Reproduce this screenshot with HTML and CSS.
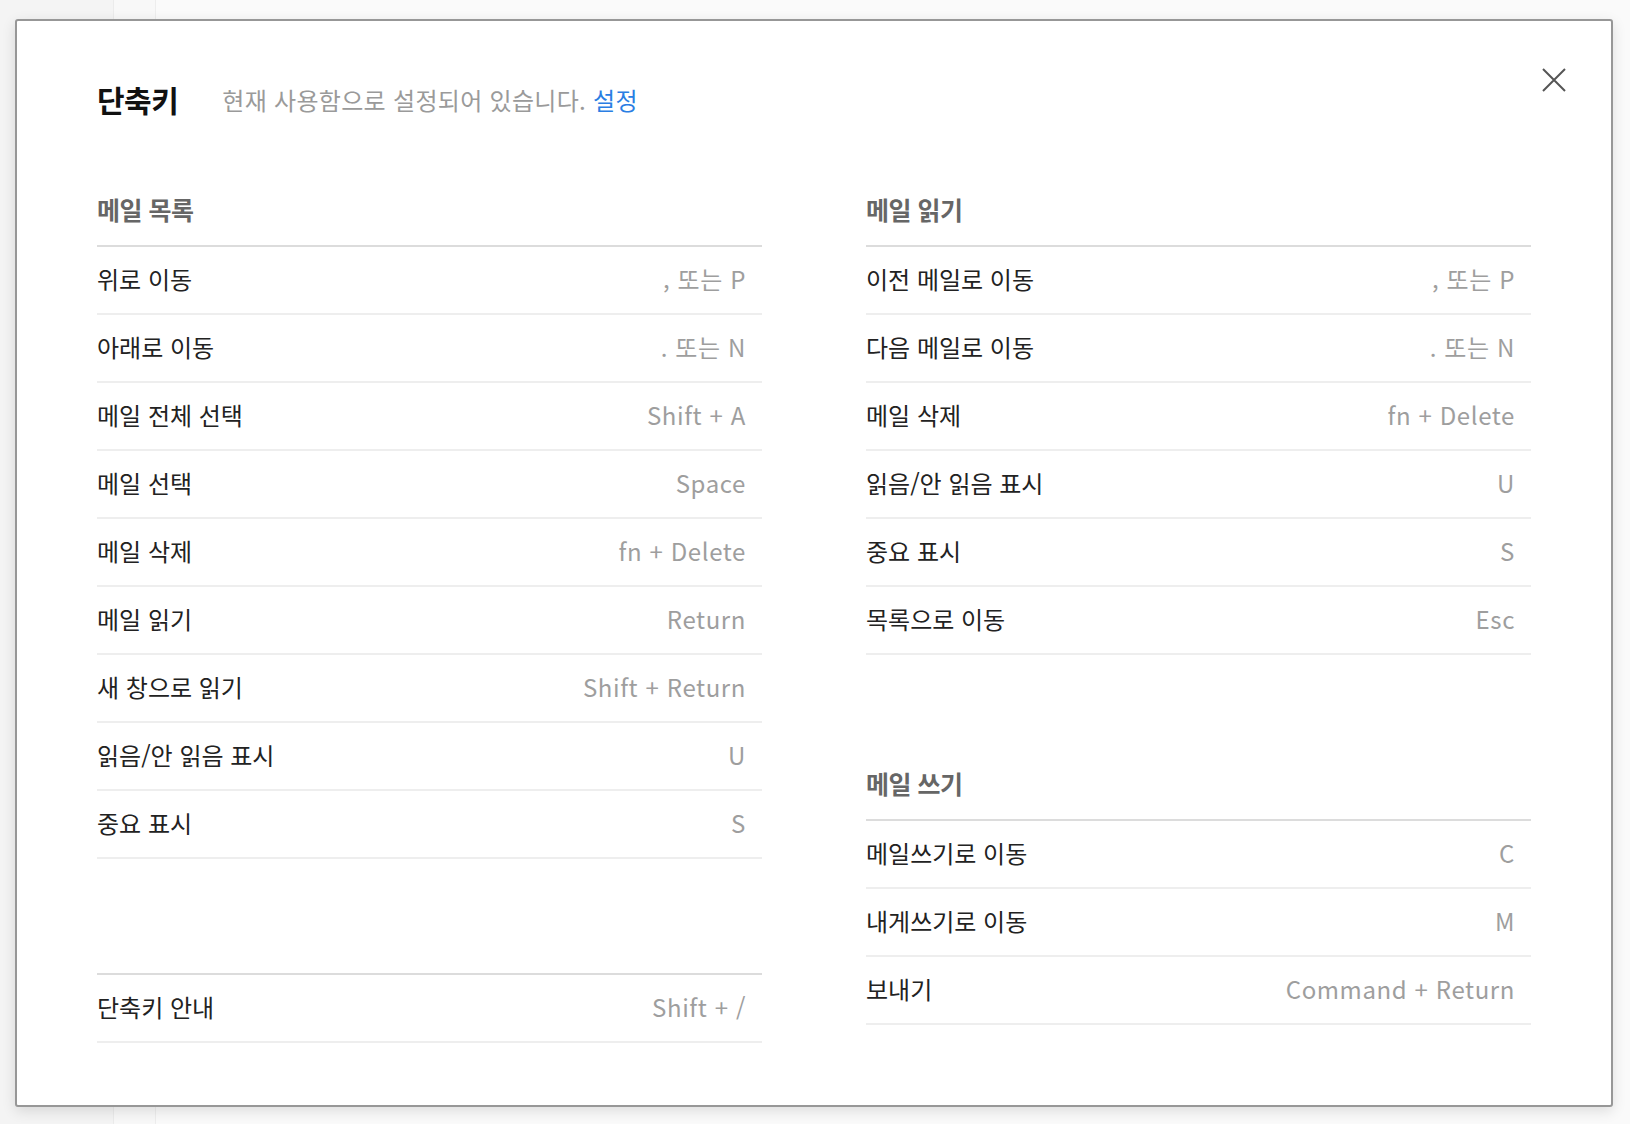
FILE: index.html
```html
<!DOCTYPE html>
<html lang="ko">
<head>
    <meta charset="UTF-8">
    <meta name="viewport" content="width=device-width, initial-scale=1.0">
    <title>단축키</title>
    <link rel="stylesheet" href="styles.css">
</head>
<body>
    <div class="app">
        <div class="app-nav"></div>
        <div class="app-side"></div>
        <div class="app-main"></div>
    </div>

    <div class="modal">
        <div class="modal-head">
            <h1 class="modal-title">단축키</h1>
            <p class="modal-desc">현재 사용함으로 설정되어 있습니다. <a href="#" class="link">설정</a></p>
        </div>

        <button class="close" aria-label="닫기">
            <svg width="24" height="24" viewBox="0 0 24 24">
                <path d="M1 1L23 23M23 1L1 23" stroke="#555" stroke-width="2" fill="none"/>
            </svg>
        </button>

        <div class="columns">
            <div class="column">
                <h2 class="section-title">메일 목록</h2>
                <ul class="keys">
                    <li><span class="name">위로 이동</span><span class="key">, 또는 P</span></li>
                    <li><span class="name">아래로 이동</span><span class="key">. 또는 N</span></li>
                    <li><span class="name">메일 전체 선택</span><span class="key">Shift + A</span></li>
                    <li><span class="name">메일 선택</span><span class="key">Space</span></li>
                    <li><span class="name">메일 삭제</span><span class="key">fn + Delete</span></li>
                    <li><span class="name">메일 읽기</span><span class="key">Return</span></li>
                    <li><span class="name">새 창으로 읽기</span><span class="key">Shift + Return</span></li>
                    <li><span class="name">읽음/안 읽음 표시</span><span class="key">U</span></li>
                    <li><span class="name">중요 표시</span><span class="key">S</span></li>
                </ul>
                <ul class="keys guide">
                    <li><span class="name">단축키 안내</span><span class="key">Shift + /</span></li>
                </ul>
            </div>

            <div class="column">
                <h2 class="section-title">메일 읽기</h2>
                <ul class="keys">
                    <li><span class="name">이전 메일로 이동</span><span class="key">, 또는 P</span></li>
                    <li><span class="name">다음 메일로 이동</span><span class="key">. 또는 N</span></li>
                    <li><span class="name">메일 삭제</span><span class="key">fn + Delete</span></li>
                    <li><span class="name">읽음/안 읽음 표시</span><span class="key">U</span></li>
                    <li><span class="name">중요 표시</span><span class="key">S</span></li>
                    <li><span class="name">목록으로 이동</span><span class="key">Esc</span></li>
                </ul>

                <h2 class="section-title next">메일 쓰기</h2>
                <ul class="keys">
                    <li><span class="name">메일쓰기로 이동</span><span class="key">C</span></li>
                    <li><span class="name">내게쓰기로 이동</span><span class="key">M</span></li>
                    <li><span class="name">보내기</span><span class="key">Command + Return</span></li>
                </ul>
            </div>
        </div>
    </div>
</body>
</html>
```

FILE: styles.css
```css
* {
    box-sizing: border-box;
}

body {
    margin: 0;
    height: 100vh;
    overflow: hidden;
    background-color: #f7f7f7;
    font-family: "Noto Sans CJK KR", "Noto Sans", sans-serif;
    color: #222;
}

.app {
    display: flex;
    height: 100%;
}

.app-nav {
    width: 114px;
    background-color: #f4f4f4;
    border-right: 1px solid #ebebeb;
}

.app-side {
    width: 42px;
    background-color: #f8f8f8;
    border-right: 1px solid #ededed;
}

.app-main {
    flex: 1;
    background-color: #fafafa;
}

.modal {
    position: absolute;
    left: 15px;
    top: 19px;
    width: 1598px;
    height: 1088px;
    background: #fff;
    border: 2px solid #979797;
    border-radius: 3px;
    box-shadow: 0 4px 14px rgba(0, 0, 0, 0.12);
    padding: 0 80px;
}

.modal-head {
    display: flex;
    align-items: center;
    height: 40px;
    margin-top: 58px;
}

.modal-title {
    margin: 0;
    font-size: 30px;
    font-weight: 700;
    letter-spacing: -0.5px;
    color: #111;
}

.modal-desc {
    margin: 0 0 0 44px;
    font-size: 24px;
    letter-spacing: 0.3px;
    color: #9a9a9a;
}

.link {
    color: #2a7ee3;
    text-decoration: none;
}

.close {
    position: absolute;
    top: 47px;
    right: 45px;
    width: 24px;
    height: 24px;
    padding: 0;
    border: 0;
    background: none;
    cursor: pointer;
}

.close svg {
    display: block;
}

.columns {
    display: grid;
    grid-template-columns: 1fr 1fr;
    column-gap: 104px;
    margin-top: 56px;
}

.column {
    display: flex;
    flex-direction: column;
}

.section-title {
    margin: 0;
    height: 72px;
    padding-top: 19px;
    line-height: 30px;
    font-size: 25px;
    font-weight: 700;
    letter-spacing: -0.5px;
    color: #666;
    border-bottom: 2px solid #dcdcdc;
}

.section-title.next {
    margin-top: 94px;
}

.keys {
    list-style: none;
    margin: 0;
    padding: 0;
}

.keys li {
    display: flex;
    justify-content: space-between;
    align-items: center;
    height: 68px;
    padding-right: 16px;
    padding-bottom: 3px;
    border-bottom: 2px solid #eeeeee;
    font-size: 24px;
}

.name {
    color: #222;
}

.key {
    color: #9e9e9e;
    letter-spacing: 0.6px;
}

.guide {
    margin-top: 114px;
    border-top: 2px solid #dcdcdc;
}
```
